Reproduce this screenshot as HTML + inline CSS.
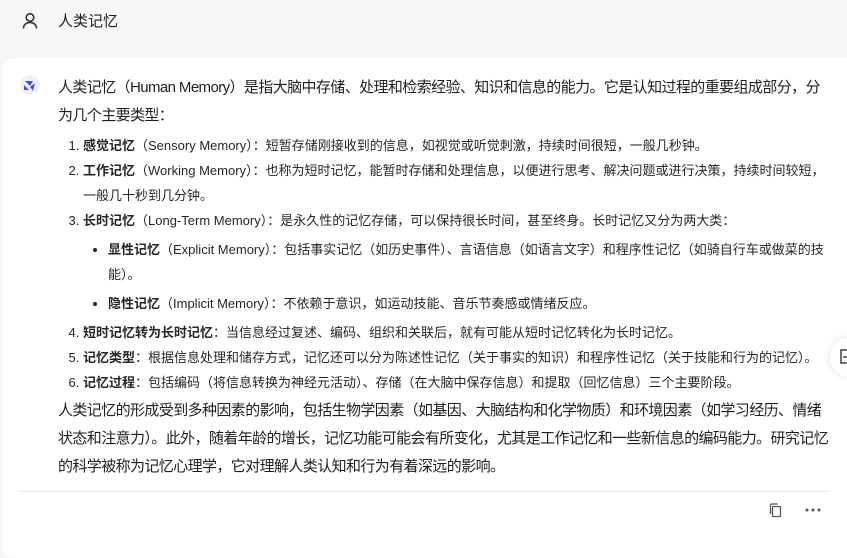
<!DOCTYPE html>
<html><head><meta charset="utf-8"><style>
body{margin:0;width:847px;height:539px;background:#f7f7f8;font-family:"Liberation Sans","Noto Sans CJK SC",sans-serif;color:#1f1f1f;overflow:hidden;position:relative}
.q{position:absolute;left:58px;top:12px;font-size:15px;line-height:20px}
.card{position:absolute;left:3px;top:58px;width:860px;height:500px;background:#fff;border-radius:12px}
.main{position:absolute;left:58px;top:74px;width:775px;font-size:15px;line-height:28px}
p{margin:0;letter-spacing:-0.6px}
ol{margin:3px 0 0;padding:0 0 0 25px;font-size:13px;line-height:25px;color:#262626}
ol li{padding-left:0}
ol li::marker{font-size:13px}
ul{margin:4px 0 4px;padding-left:25px;list-style:disc}
ul li{line-height:25px;margin-bottom:4px}
b{font-weight:bold}
.hr{position:absolute;left:18px;top:491px;width:812px;height:1px;background:#e8e8e8}
.fab{position:absolute;left:830px;top:337px;width:40px;height:40px;border-radius:20px;background:#fff;box-shadow:0 0 8px rgba(0,0,0,.12)}
</style></head><body>
<svg style="position:absolute;left:22px;top:12px" width="16" height="18" viewBox="0 0 16 18"><circle cx="8" cy="5.5" r="3.8" fill="none" stroke="#333" stroke-width="1.6"/><path d="M1.5 16.5c0-4 3-6 6.5-6s6.5 2 6.5 6" fill="none" stroke="#333" stroke-width="1.6"/></svg>
<div class="q">人类记忆</div>
<div class="card"></div>
<svg style="position:absolute;left:20px;top:75px" width="20" height="20" viewBox="0 0 20 20"><circle cx="10" cy="10" r="10" fill="#eef0fb"/><path d="M5 6h8l-3 5zM15 8l-2 8-3-4zM4 10l5 5H4z" fill="#4a4fd8"/></svg>
<div class="main">
<p>人类记忆（Human Memory）是指大脑中存储、处理和检索经验、知识和信息的能力。它是认知过程的重要组成部分，分为几个主要类型：</p>
<ol>
<li><b>感觉记忆</b>（Sensory Memory）：短暂存储刚接收到的信息，如视觉或听觉刺激，持续时间很短，一般几秒钟。</li>
<li><b>工作记忆</b>（Working Memory）：也称为短时记忆，能暂时存储和处理信息，以便进行思考、解决问题或进行决策，持续时间较短，一般几十秒到几分钟。</li>
<li><b>长时记忆</b>（Long-Term Memory）：是永久性的记忆存储，可以保持很长时间，甚至终身。长时记忆又分为两大类：
<ul><li><b>显性记忆</b>（Explicit Memory）：包括事实记忆（如历史事件）、言语信息（如语言文字）和程序性记忆（如骑自行车或做菜的技能）。</li>
<li><b>隐性记忆</b>（Implicit Memory）：不依赖于意识，如运动技能、音乐节奏感或情绪反应。</li></ul></li>
<li><b>短时记忆转为长时记忆</b>：当信息经过复述、编码、组织和关联后，就有可能从短时记忆转化为长时记忆。</li>
<li><b>记忆类型</b>：根据信息处理和储存方式，记忆还可以分为陈述性记忆（关于事实的知识）和程序性记忆（关于技能和行为的记忆）。</li>
<li><b>记忆过程</b>：包括编码（将信息转换为神经元活动）、存储（在大脑中保存信息）和提取（回忆信息）三个主要阶段。</li>
</ol>
<p style="margin-top:2px">人类记忆的形成受到多种因素的影响，包括生物学因素（如基因、大脑结构和化学物质）和环境因素（如学习经历、情绪状态和注意力）。此外，随着年龄的增长，记忆功能可能会有所变化，尤其是工作记忆和一些新信息的编码能力。研究记忆的科学被称为记忆心理学，它对理解人类认知和行为有着深远的影响。</p>
</div>
<div class="hr"></div>
<div class="fab"><svg style="position:absolute;left:10px;top:12px" width="14" height="16" viewBox="0 0 14 16"><rect x="1" y="1" width="10" height="13" fill="none" stroke="#333" stroke-width="1.4"/><path d="M3 8h6" stroke="#333" stroke-width="1.4"/></svg></div>
<svg style="position:absolute;left:769px;top:503px" width="13" height="15" viewBox="0 0 13 15"><rect x="3.5" y="3.5" width="8" height="10" rx="1" fill="none" stroke="#555" stroke-width="1.3"/><path d="M1.5 11V2a1 1 0 0 1 1-1h6" fill="none" stroke="#555" stroke-width="1.3"/></svg>
<svg style="position:absolute;left:805px;top:508px" width="16" height="4"><circle cx="2" cy="2" r="1.5" fill="#555"/><circle cx="8" cy="2" r="1.5" fill="#555"/><circle cx="14" cy="2" r="1.5" fill="#555"/></svg>
</body></html>
